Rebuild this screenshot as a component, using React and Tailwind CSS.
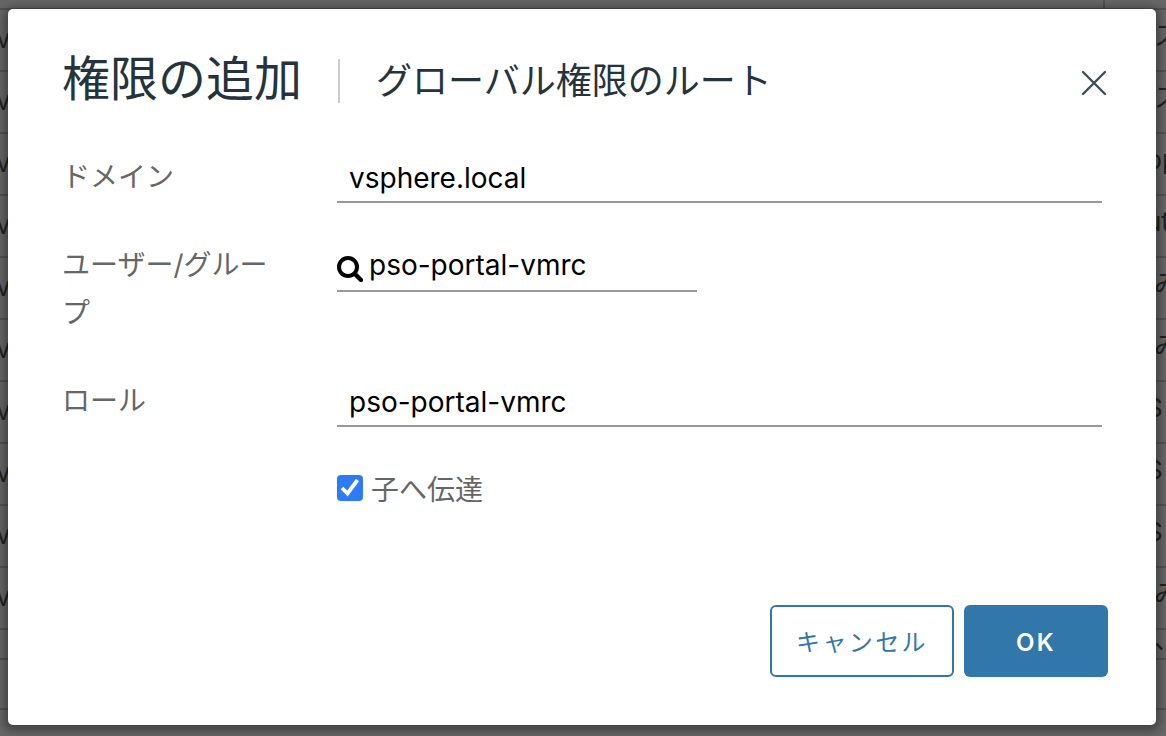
import React from "react";

const latin = "w-5 whitespace-nowrap";
const kana = "w-3 whitespace-nowrap";

const rows = [
  { left: "v", right: "ス", column: kana },
  { left: "v", right: "ス", column: kana },
  { left: "v", right: "pp", column: latin },
  { left: "v", right: "ut", column: latin },
  { left: "v", right: "み", column: kana },
  { left: "v", right: "み", column: kana },
  { left: "v", right: "S", column: latin },
  { left: "v", right: "S", column: latin },
  { left: "v", right: "S", column: latin },
  { left: "v", right: "み", column: kana },
];

function BackdropTable() {
  return (
    <div
      aria-hidden="true"
      className="absolute inset-0 flex flex-col overflow-hidden bg-[#666666] text-[26px] leading-[52px] text-[#222222]"
    >
      <div className="flex h-[10px] shrink-0 justify-end border-b-2 border-[#515151]">
        <div className="mr-[61px] w-[2px] bg-[#4c5255]" />
      </div>
      {rows.map((row, i) => (
        <div
          key={i}
          className="flex h-[62px] shrink-0 justify-between border-b-2 border-[#515151]"
        >
          <span className="-ml-1 leading-[58px]">{row.left}</span>
          <span className={row.column}>{row.right}</span>
        </div>
      ))}
      <div className="flex h-[30px] shrink-0 justify-end border-b-2 border-[#4c5255] leading-[20px]">
        <span className="w-3">、</span>
      </div>
      <div className="h-[50px] shrink-0 border-b-2 border-[#515151]" />
    </div>
  );
}

function SearchIcon() {
  return (
    <svg viewBox="0 0 26 26" className="mt-2 size-[26px] shrink-0" fill="none" stroke="#000" aria-hidden="true">
      <circle cx="11" cy="11" r="9" strokeWidth="4" />
      <path d="M18 18l6 6" strokeWidth="4.4" strokeLinecap="round" />
    </svg>
  );
}

export default function App() {
  return (
    <div className="relative min-h-screen pt-[9px] pr-[10px] pb-[11px] pl-2 font-[Inter,'Noto_Sans_CJK_JP',sans-serif]">
      <BackdropTable />
      <div
        role="dialog"
        aria-labelledby="dialog-title"
        className="relative rounded-[5px] bg-white pt-10 pr-[48px] pb-12 pl-[54px] shadow-[0_2px_8px_4px_rgba(0,0,0,0.35)]"
      >
        <header className="flex items-center">
          <h1 id="dialog-title" className="pb-1 text-[48px] leading-[60px] text-[#25333d]">
            権限の追加
          </h1>
          <h2 className="ml-9 border-l-2 border-[#cccccc] pl-9 text-[36px] leading-[44px] text-[#25333d]">
            グローバル権限のルート
          </h2>
          <button type="button" aria-label="閉じる" className="mt-1 ml-auto flex size-7 items-center justify-center">
            <svg viewBox="0 0 26 26" className="size-[26px]" fill="none" stroke="#3f4f58" strokeWidth="2.4" strokeLinecap="round">
              <path d="M2 2l22 22M24 2L2 24" />
            </svg>
          </button>
        </header>

        <form className="mt-[38px] text-[28px] leading-12 text-[#666666]">
          <div className="mr-[6px] flex gap-[59px]">
            <label htmlFor="domain" className="w-[216px] shrink-0 pt-[2px]">ドメイン</label>
            <select
              id="domain"
              className="h-[52px] min-w-0 flex-1 appearance-none border-b-2 border-[#999999] bg-transparent px-3 pt-1 text-[28px] leading-[46px] text-black"
            >
              <option>vsphere.local</option>
            </select>
          </div>
          <div className="mt-9 mr-[6px] flex items-start gap-[59px]">
            <label htmlFor="user" className="w-[216px] shrink-0 pt-[2px]">ユーザー/グループ</label>
            <div className="flex h-[53px] w-[360px] items-center gap-[6px] border-b-2 border-[#999999]">
              <SearchIcon />
              <input
                id="user"
                type="text"
                defaultValue="pso-portal-vmrc"
                className="min-w-0 flex-1 bg-transparent text-[28px] leading-12 text-black"
              />
            </div>
          </div>
          <div className="mt-[38px] mr-[6px] flex gap-[59px]">
            <label htmlFor="role" className="w-[216px] shrink-0 pt-[2px]">ロール</label>
            <select
              id="role"
              className="h-[52px] min-w-0 flex-1 appearance-none border-b-2 border-[#999999] bg-transparent px-3 pt-1 text-[28px] leading-[46px] text-black"
            >
              <option>pso-portal-vmrc</option>
            </select>
          </div>
          <div className="mt-[35px] ml-[275px] flex items-center gap-2">
            <span className="grid size-[26px]">
              <input
                id="propagate"
                type="checkbox"
                defaultChecked
                className="peer col-start-1 row-start-1 size-[26px] appearance-none rounded-[4px] border-2 border-[#999999] checked:border-[#2d7bf9] checked:bg-[#2d7bf9]"
              />
              <svg
                viewBox="0 0 26 26"
                className="pointer-events-none invisible col-start-1 row-start-1 size-[26px] peer-checked:visible"
                fill="none"
                stroke="#fff"
                strokeWidth="3.8"
              >
                <path d="M5 13L10.5 18.5L20.5 5" />
              </svg>
            </span>
            <label htmlFor="propagate" className="pt-1">子へ伝達</label>
          </div>
        </form>

        <footer className="mt-[91px] flex justify-end gap-[10px] text-[24px] tracking-widest">
          <button type="button" className="h-[72px] rounded-md border-2 border-[#3177a9] px-6 pt-1 text-[#3177a9]">
            キャンセル
          </button>
          <button type="button" className="h-[72px] w-36 rounded-md bg-[#3177a9] pt-1 font-semibold text-white">
            OK
          </button>
        </footer>
      </div>
    </div>
  );
}
